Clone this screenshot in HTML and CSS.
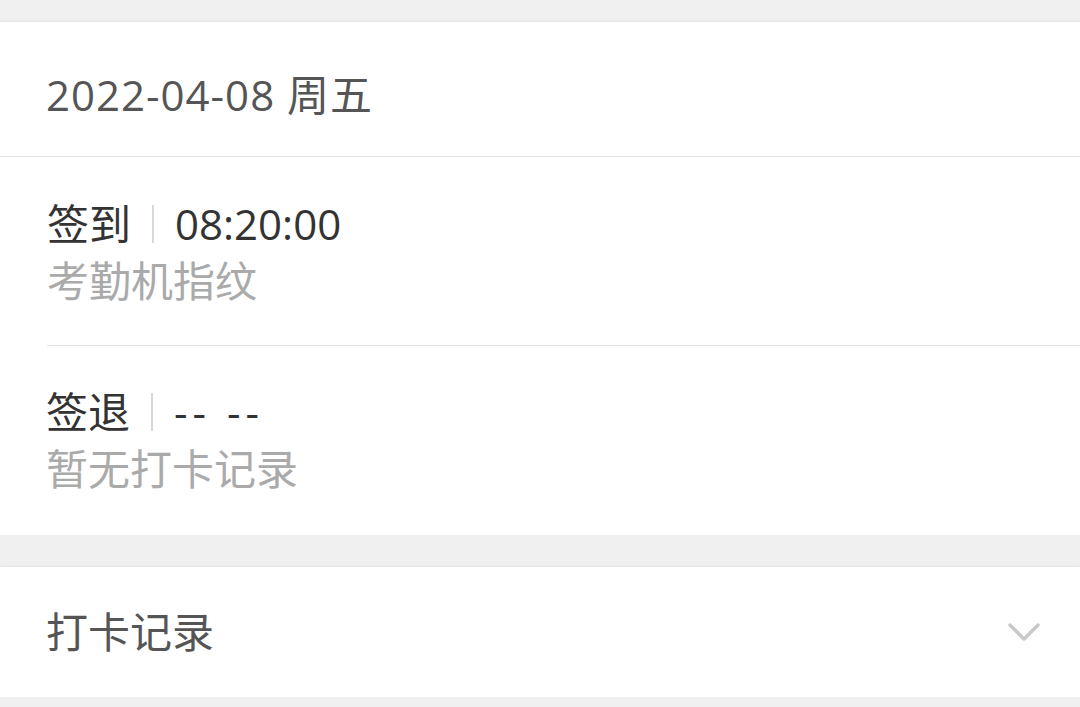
FILE: index.html
```html
<!DOCTYPE html>
<html lang="zh-CN">
<head>
    <meta charset="UTF-8">
    <meta name="viewport" content="width=device-width, initial-scale=1.0">
    <title>考勤</title>
    <link rel="stylesheet" href="styles.css">
</head>
<body>
    <div class="card">
        <div class="date-row">2022-04-08 周五</div>

        <div class="punch punch-in">
            <div class="punch-head">
                <span class="punch-label">签到</span>
                <span class="sep"></span>
                <span class="punch-time">08:20:00</span>
            </div>
            <div class="punch-sub">考勤机指纹</div>
        </div>

        <div class="punch punch-out">
            <div class="punch-head">
                <span class="punch-label">签退</span>
                <span class="sep"></span>
                <span class="punch-time empty">-- --</span>
            </div>
            <div class="punch-sub">暂无打卡记录</div>
        </div>
    </div>

    <div class="card record">
        <span class="record-title">打卡记录</span>
        <svg class="chevron" width="32" height="22" viewBox="0 0 32 22">
            <path d="M2 4 L16 18 L30 4" fill="none" stroke="#c9c9c9" stroke-width="3.5" stroke-linecap="round" stroke-linejoin="round"/>
        </svg>
    </div>
</body>
</html>
```

FILE: styles.css
```css
/* attendance detail page */
body {
    margin: 0;
    padding-top: 22px;
    background-color: #f0f0f0;
    font-family: "Open Sans", "Noto Sans CJK SC", sans-serif;
    font-size: 42px;
    line-height: 56px;
    color: #333;
}
.card {
    background-color: #fff;
    box-shadow: 0 -1px 2px rgba(0, 0, 0, 0.06);
}
.date-row {
    padding: 45px 46px 33px;
    color: #555;
    letter-spacing: 1px;
    border-bottom: 1px solid #e4e4e4;
}
.punch-head {
    display: flex;
    align-items: center;
}
.punch-label {
    color: #333;
}
.sep {
    width: 2px;
    height: 38px;
    background-color: #d8d8d8;
    margin: 0 21px;
}
.punch-time {
    color: #333;
}
.punch-time.empty {
    letter-spacing: 5px;
}
.punch-sub {
    color: #aaa;
    line-height: 58px;
}
.punch-in {
    padding-top: 39px;
    padding-bottom: 35px;
    margin-left: 47px;
    border-bottom: 1px solid #e4e4e4;
}
.punch-out {
    padding: 38px 0 37px 46px;
}
.record {
    margin-top: 32px;
    height: 130px;
    display: flex;
    align-items: center;
    justify-content: space-between;
    padding: 0 40px 0 46px;
}
.record-title {
    color: #555;
}
.chevron {
    display: block;
}
```
